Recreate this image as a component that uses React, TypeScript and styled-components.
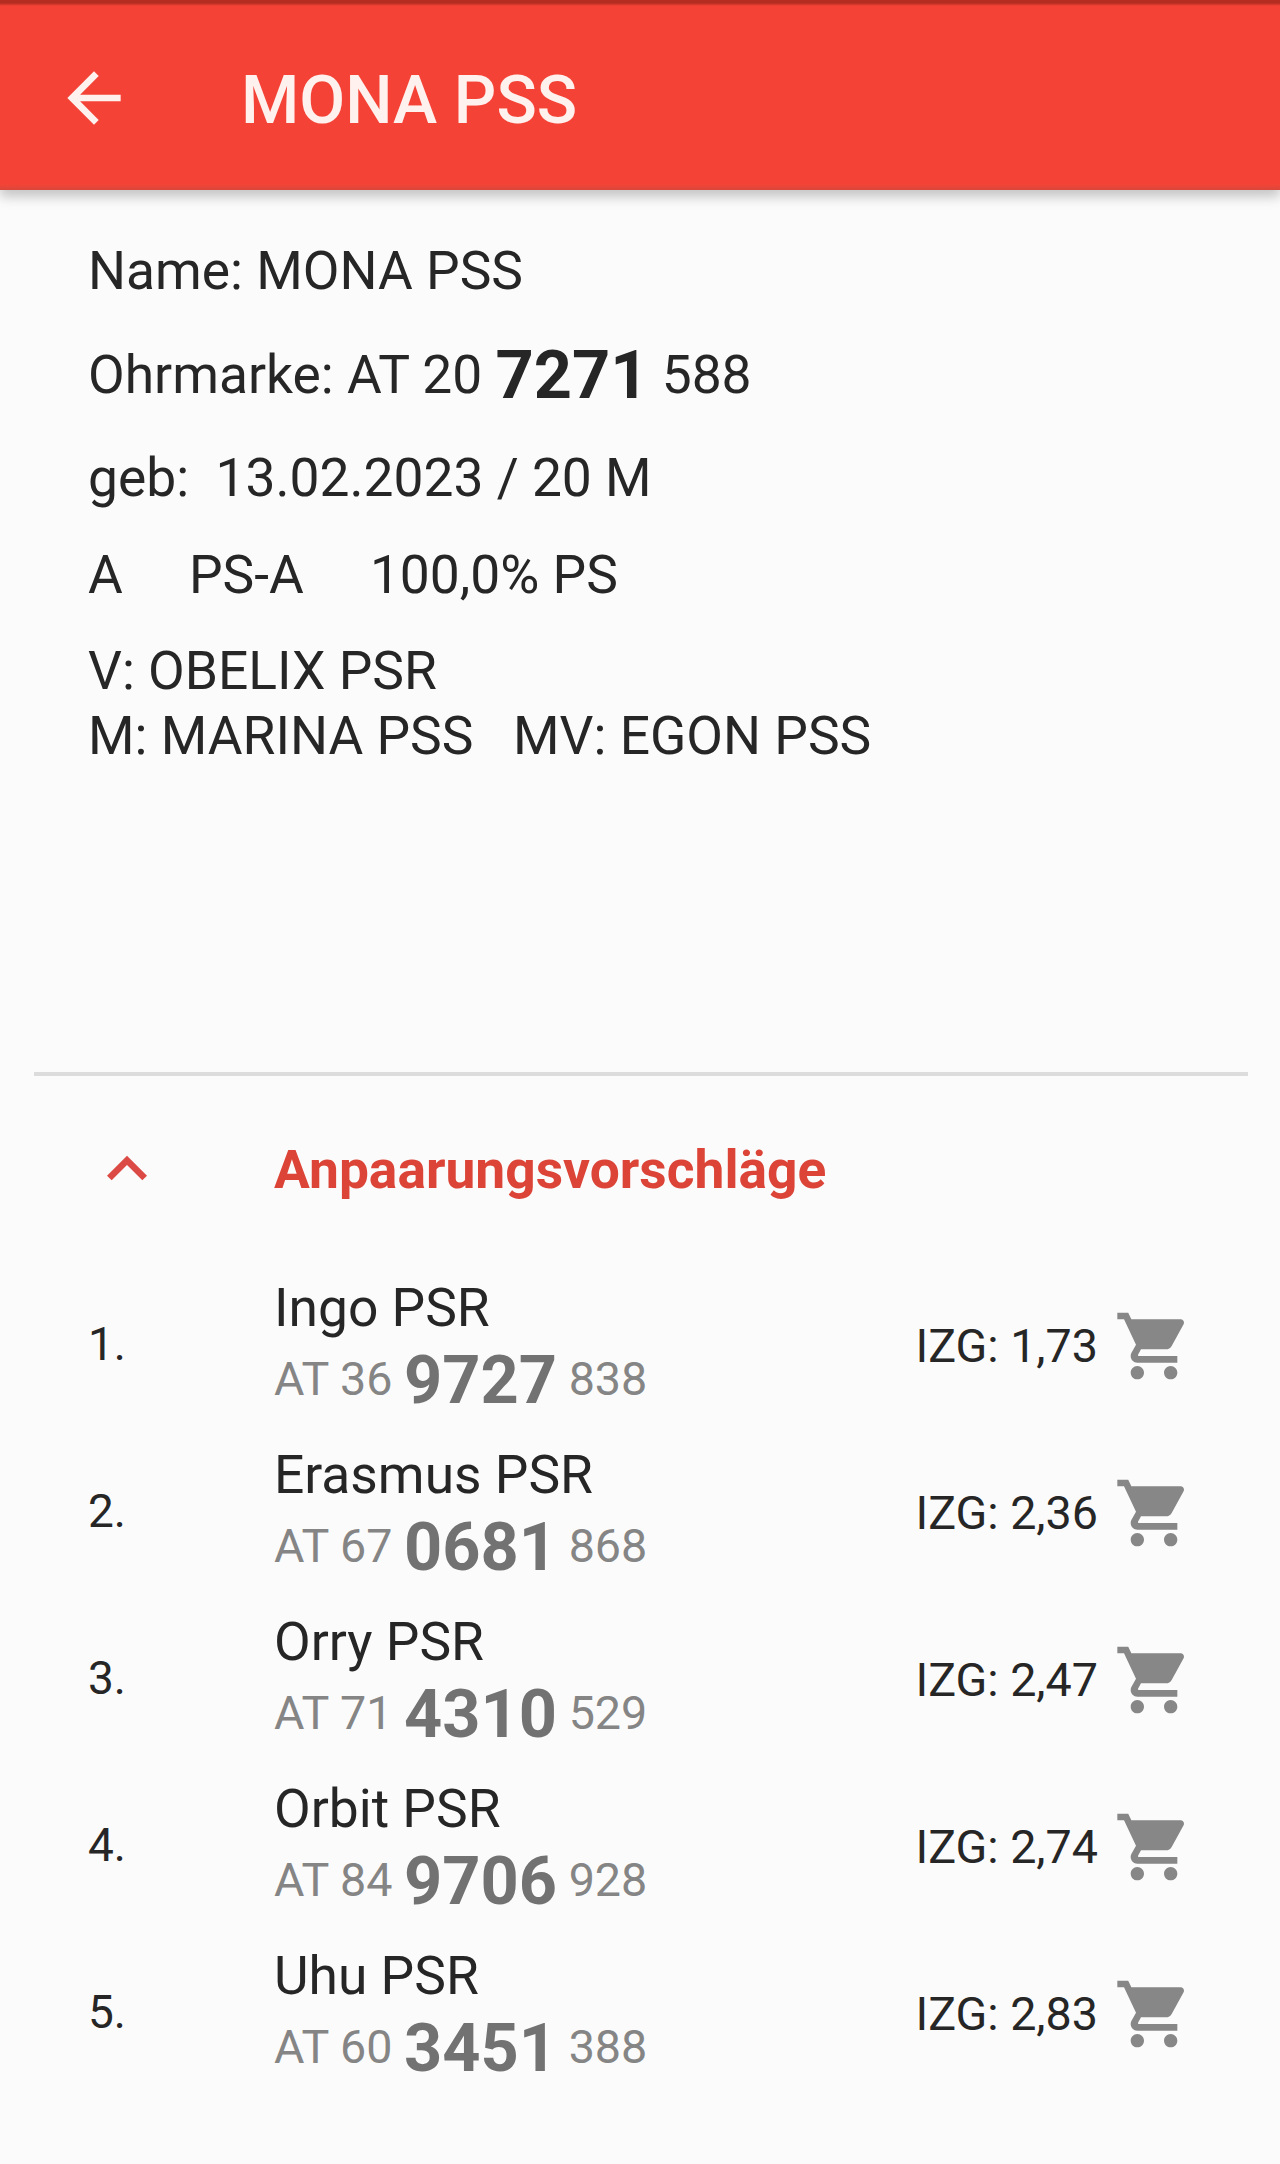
import React from "react";
import styled, { createGlobalStyle } from "styled-components";

const GlobalStyle = createGlobalStyle`
  * { box-sizing: border-box; }
  body {
    margin: 0;
    background: #fbfbfb;
    color: #262626;
    font-family: Roboto, sans-serif;
    font-size: 53.33px;
  }
`;

const Screen = styled.div`
  width: 1280px;
  height: 2164px;
  overflow: hidden;
  display: flex;
  flex-direction: column;
`;

const AppBar = styled.header`
  flex: none;
  height: 190px;
  padding: 5px 54px 0;
  display: flex;
  align-items: center;
  gap: 107px;
  background: linear-gradient(#b52d20 0, #b52d20 3px, #f44336 6px, #f44336 184px, #d8483b 190px);
  box-shadow: 0 7px 10px rgba(0, 0, 0, 0.17), 0 3px 20px rgba(0, 0, 0, 0.08);
`;

const AppTitle = styled.h1`
  margin: 0;
  padding-top: 4px;
  font-size: 66.67px;
  line-height: 80px;
  font-weight: 500;
  color: #fff1ee;
  white-space: nowrap;
`;

const IconButton = styled.button<{ $color: string }>`
  flex: none;
  width: 80px;
  height: 80px;
  padding: 0;
  border: 0;
  background: none;
  color: ${(p) => p.$color};
  svg { display: block; width: 80px; height: 80px; fill: currentColor; }
`;

const Details = styled.section`
  flex: none;
  height: 882px;
  padding: 29px 88px 0;
`;

const DetailLine = styled.div<{ $height: number }>`
  height: ${(p) => p.$height}px;
  display: flex;
  align-items: center;
  white-space: pre;
  line-height: 64px;
`;

const TagNumber = styled.strong<{ $gap: number }>`
  margin: 0 ${(p) => p.$gap}px;
  font-size: 66.67px;
  font-weight: 700;
`;

const Divider = styled.hr`
  flex: none;
  height: 4px;
  width: 1214px;
  margin: 0 32px 0 34px;
  border: 0;
  background: #dcdcdc;
`;

const SectionHeader = styled.div`
  flex: none;
  height: 186px;
  padding: 0 87px;
  display: flex;
  align-items: center;
  gap: 107px;
`;

const SectionTitle = styled.h2`
  margin: 0;
  padding-top: 2px;
  font-size: 53.33px;
  line-height: 64px;
  font-weight: 700;
  color: #db4437;
`;

const List = styled.ol`
  margin: 0;
  padding: 0;
  list-style: none;
`;

const Row = styled.li`
  height: 167.1px;
  padding: 0 86px 0 88px;
  display: grid;
  grid-template-columns: 186px 1fr auto 80px;
  align-items: center;
`;

const Index = styled.span`
  padding-bottom: 3px;
  font-size: 46px;
  line-height: 60px;
`;

const Names = styled.div`
  line-height: 70px;
`;

const EarTag = styled.div`
  height: 75px;
  display: flex;
  align-items: center;
  line-height: 72px;
  font-size: 46.67px;
  color: #858585;
  strong { color: #727272; padding-bottom: 2px; }
`;

const TagPart = styled.span`
  padding-bottom: 3px;
`;

const Score = styled.span`
  margin-right: 16px;
  padding-top: 1px;
  font-size: 46.67px;
  line-height: 60px;
`;

const bulls = [
  { name: "Ingo PSR", tag: ["AT 36", "9727", "838"], score: "1,73" },
  { name: "Erasmus PSR", tag: ["AT 67", "0681", "868"], score: "2,36" },
  { name: "Orry PSR", tag: ["AT 71", "4310", "529"], score: "2,47" },
  { name: "Orbit PSR", tag: ["AT 84", "9706", "928"], score: "2,74" },
  { name: "Uhu PSR", tag: ["AT 60", "3451", "388"], score: "2,83" },
];

const BackIcon = () => (
  <svg viewBox="0 0 24 24">
    <path d="M20 11H7.83l5.59-5.59L12 4l-8 8 8 8 1.41-1.41L7.83 13H20v-2z" />
  </svg>
);

const CollapseIcon = () => (
  <svg viewBox="0 0 24 24">
    <path d="M12 8l-6 6 1.41 1.41L12 10.83l4.59 4.58L18 14z" />
  </svg>
);

const CartIcon = () => (
  <svg viewBox="0 0 24 24">
    <path d="M7 18c-1.1 0-1.99.9-1.99 2S5.9 22 7 22s2-.9 2-2-.9-2-2-2zM1 2v2h2l3.6 7.590-1.350 2.450c-.16.28-.25.61-.25.96 0 1.100.9 2 2 2h12v-2H7.420c-.14 0-.25-.11-.25-.25l.03-.12.9-1.630h7.450c.75 0 1.410-.41 1.750-1.030l3.580-6.490c.08-.14.12-.31.12-.48 0-.55-.45-1-1-1H5.210l-.94-2H1zm16 16c-1.100 0-1.990.9-1.990 2s.89 2 1.990 2 2-.9 2-2-.9-2-2-2z" />
  </svg>
);

export default function App() {
  return (
    <Screen>
      <GlobalStyle />
      <AppBar>
        <IconButton $color="#fff1ee" aria-label="Zurück"><BackIcon /></IconButton>
        <AppTitle>MONA PSS</AppTitle>
      </AppBar>
      <Details>
        <DetailLine $height={104}>Name: MONA PSS</DetailLine>
        <DetailLine $height={104}>
          <span>Ohrmarke: AT 20</span>
          <TagNumber $gap={13.2}>7271</TagNumber>
          <span>588</span>
        </DetailLine>
        <DetailLine $height={102}>{"geb:  13.02.2023 / 20 M"}</DetailLine>
        <DetailLine $height={92}>{"A     PS-A     100,0% PS"}</DetailLine>
        <DetailLine $height={100}>V: OBELIX PSR</DetailLine>
        <DetailLine $height={30}>{"M: MARINA PSS   MV: EGON PSS"}</DetailLine>
      </Details>
      <Divider />
      <SectionHeader>
        <IconButton $color="#dc4a45" aria-label="Einklappen"><CollapseIcon /></IconButton>
        <SectionTitle>Anpaarungsvorschläge</SectionTitle>
      </SectionHeader>
      <List>
        {bulls.map((bull, i) => (
          <Row key={bull.name}>
            <Index>{i + 1}.</Index>
            <Names>
              {bull.name}
              <EarTag>
                <TagPart>{bull.tag[0]}</TagPart>
                <TagNumber $gap={11.6}>{bull.tag[1]}</TagNumber>
                <TagPart>{bull.tag[2]}</TagPart>
              </EarTag>
            </Names>
            <Score>IZG: {bull.score}</Score>
            <IconButton $color="#878787" aria-label="In den Warenkorb"><CartIcon /></IconButton>
          </Row>
        ))}
      </List>
    </Screen>
  );
}
